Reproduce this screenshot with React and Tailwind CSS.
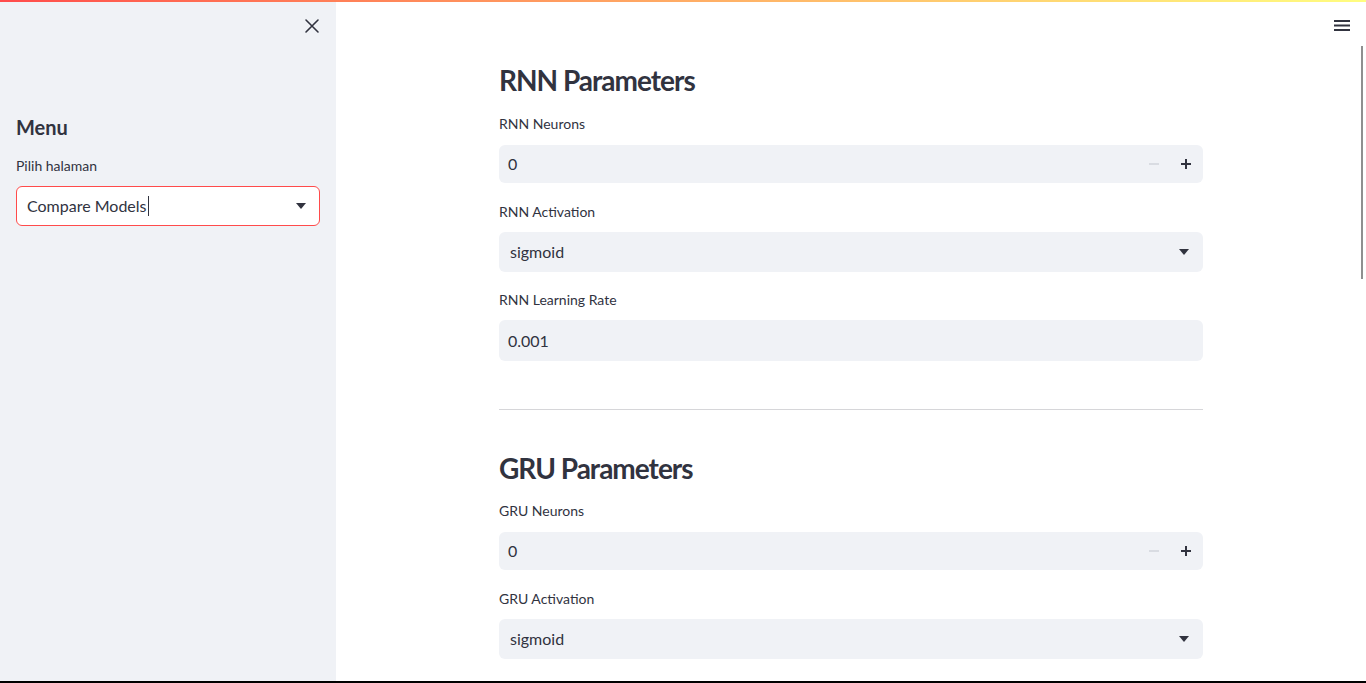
import React from "react";

const FONT = { fontFamily: "Lato, 'Noto Sans', sans-serif" };

function Caret() {
  return (
    <svg width="10" height="6" viewBox="0 0 10 6" className="text-[#31333f]">
      <path d="M0 0h10L5 6z" fill="currentColor" />
    </svg>
  );
}

function Label({ children }) {
  return <div className="text-[14px] leading-[20px] text-[#31333f]">{children}</div>;
}

function NumberInput({ value, className = "" }) {
  return (
    <div className={`flex items-center h-[38px] rounded-[6px] bg-[#f0f2f6] pl-[9px] pr-[1px] ${className}`}>
      <span className="flex-1 text-[16px] text-[#31333f]">{value}</span>
      <span className="w-[32px] flex justify-center">
        <svg width="10" height="10" viewBox="0 0 10 10"><path d="M0 5h10" stroke="#d4d6de" strokeWidth="1.6" /></svg>
      </span>
      <span className="w-[32px] flex justify-center">
        <svg width="10" height="10" viewBox="0 0 10 10"><path d="M0 5h10M5 0v10" stroke="#31333f" strokeWidth="2" /></svg>
      </span>
    </div>
  );
}

function SelectBox({ value, className = "" }) {
  return (
    <div className={`flex items-center h-[40px] rounded-[6px] bg-[#f0f2f6] pl-[11px] pr-[14px] ${className}`}>
      <span className="flex-1 text-[16px] text-[#31333f]">{value}</span>
      <Caret />
    </div>
  );
}

function TextInput({ value, className = "" }) {
  return (
    <div className={`flex items-center h-[41px] rounded-[6px] bg-[#f0f2f6] pl-[9px] ${className}`}>
      <span className="text-[16px] text-[#31333f]">{value}</span>
    </div>
  );
}

export default function App() {
  return (
    <div className="h-[683px] w-full flex flex-col bg-white overflow-hidden" style={FONT}>
      <div className="h-[2px] w-full bg-gradient-to-r from-[#ff4b4b] to-[#fffd80]" />
      <div className="flex flex-1 min-h-0">
        {/* sidebar */}
        <aside className="w-[336px] bg-[#f0f2f6] px-[16px] flex flex-col">
          <div className="flex justify-end pt-[12px] -mr-[4px]">
            <svg width="24" height="24" viewBox="0 0 24 24" fill="none" stroke="#31333f" strokeWidth="1.6" strokeLinecap="round">
              <path d="M6 6l12 12M18 6L6 18" />
            </svg>
          </div>
          <h3 className="mt-[76px] text-[20px] leading-[26px] font-bold text-[#31333f]">Menu</h3>
          <div className="mt-[16px]">
            <Label>Pilih halaman</Label>
          </div>
          <div className="mt-[10px] flex items-center h-[40px] rounded-[6px] bg-white border border-[#ff4b4b] pl-[10px] pr-[13px]">
            <span className="flex-1 flex items-center text-[16px] text-[#31333f]">
              Compare Models
              <span className="inline-block w-px h-[20px] bg-[#31333f] ml-[1px]" />
            </span>
            <Caret />
          </div>
        </aside>

        {/* main */}
        <main className="relative flex-1">
          <div className="absolute right-[15px] top-[13px]">
            <svg width="18" height="20" viewBox="0 0 18 20" fill="none" stroke="#31333f" strokeWidth="1.8">
              <path d="M1 6h16M1 10.5h16M1 15h16" />
            </svg>
          </div>
          <div className="absolute right-[3px] top-[44px] w-[2px] h-[233px] bg-[#8f8f8f]" />

          <div className="w-[704px] mx-auto pt-[61px]">
            <h2 className="text-[28px] leading-[34px] font-bold tracking-[-1px] text-[#31333f]">RNN Parameters</h2>
            <div className="mt-[17px]"><Label>RNN Neurons</Label></div>
            <NumberInput value="0" className="mt-[11px]" />
            <div className="mt-[19px]"><Label>RNN Activation</Label></div>
            <SelectBox value="sigmoid" className="mt-[10px]" />
            <div className="mt-[18px]"><Label>RNN Learning Rate</Label></div>
            <TextInput value="0.001" className="mt-[10px]" />
            <hr className="mt-[48px] border-0 h-px bg-[#d6d6d9]" />
            <h2 className="mt-[41px] text-[28px] leading-[34px] font-bold tracking-[-1px] text-[#31333f]">GRU Parameters</h2>
            <div className="mt-[16px]"><Label>GRU Neurons</Label></div>
            <NumberInput value="0" className="mt-[11px]" />
            <div className="mt-[19px]"><Label>GRU Activation</Label></div>
            <SelectBox value="sigmoid" className="mt-[10px]" />
          </div>
        </main>
      </div>
      <div className="h-[2px] w-full bg-black" />
    </div>
  );
}
